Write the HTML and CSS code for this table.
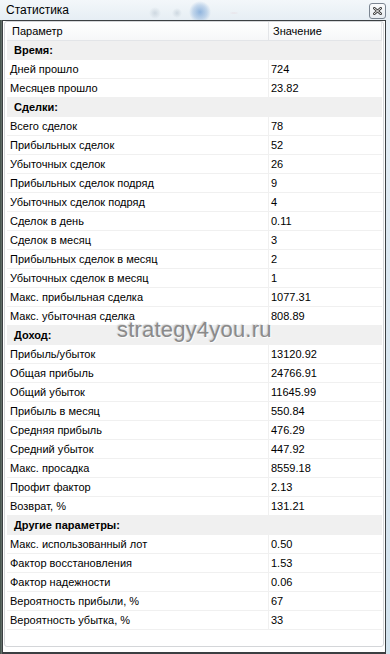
FILE: index.html
```html
<!DOCTYPE html>
<html lang="ru">
<head>
<meta charset="utf-8">
<title>Статистика</title>
<link rel="stylesheet" href="styles.css">
</head>
<body>
<div class="window">
  <div class="titlebar">
    <span class="title">Статистика</span>
    <button class="close" aria-label="Закрыть">
      <svg width="9" height="8" viewBox="0 0 9 8">
        <path d="M1 1 L8 7 M8 1 L1 7" stroke="#3c3c3c" stroke-width="2.6" stroke-linecap="square"/>
        <path d="M1 1 L8 7 M8 1 L1 7" stroke="#ffffff" stroke-width="0.9" stroke-linecap="square"/>
      </svg>
    </button>
  </div>
  <div class="client">
    <div class="list">
      <div class="row head">
        <div class="cell">Параметр</div>
        <div class="cell">Значение</div>
      </div>
      <div class="row section"><div class="cell">Время:</div><div class="cell"></div></div>
      <div class="row"><div class="cell">Дней прошло</div><div class="cell">724</div></div>
      <div class="row"><div class="cell">Месяцев прошло</div><div class="cell">23.82</div></div>
      <div class="row section"><div class="cell">Сделки:</div><div class="cell"></div></div>
      <div class="row"><div class="cell">Всего сделок</div><div class="cell">78</div></div>
      <div class="row"><div class="cell">Прибыльных сделок</div><div class="cell">52</div></div>
      <div class="row"><div class="cell">Убыточных сделок</div><div class="cell">26</div></div>
      <div class="row"><div class="cell">Прибыльных сделок подряд</div><div class="cell">9</div></div>
      <div class="row"><div class="cell">Убыточных сделок подряд</div><div class="cell">4</div></div>
      <div class="row"><div class="cell">Сделок в день</div><div class="cell">0.11</div></div>
      <div class="row"><div class="cell">Сделок в месяц</div><div class="cell">3</div></div>
      <div class="row"><div class="cell">Прибыльных сделок в месяц</div><div class="cell">2</div></div>
      <div class="row"><div class="cell">Убыточных сделок в месяц</div><div class="cell">1</div></div>
      <div class="row"><div class="cell">Макс. прибыльная сделка</div><div class="cell">1077.31</div></div>
      <div class="row"><div class="cell">Макс. убыточная сделка</div><div class="cell">808.89</div></div>
      <div class="row section"><div class="cell">Доход:</div><div class="cell"></div></div>
      <div class="row"><div class="cell">Прибыль/убыток</div><div class="cell">13120.92</div></div>
      <div class="row"><div class="cell">Общая прибыль</div><div class="cell">24766.91</div></div>
      <div class="row"><div class="cell">Общий убыток</div><div class="cell">11645.99</div></div>
      <div class="row"><div class="cell">Прибыль в месяц</div><div class="cell">550.84</div></div>
      <div class="row"><div class="cell">Средняя прибыль</div><div class="cell">476.29</div></div>
      <div class="row"><div class="cell">Средний убыток</div><div class="cell">447.92</div></div>
      <div class="row"><div class="cell">Макс. просадка</div><div class="cell">8559.18</div></div>
      <div class="row"><div class="cell">Профит фактор</div><div class="cell">2.13</div></div>
      <div class="row"><div class="cell">Возврат, %</div><div class="cell">131.21</div></div>
      <div class="row section"><div class="cell">Другие параметры:</div><div class="cell"></div></div>
      <div class="row"><div class="cell">Макс. использованный лот</div><div class="cell">0.50</div></div>
      <div class="row"><div class="cell">Фактор восстановления</div><div class="cell">1.53</div></div>
      <div class="row"><div class="cell">Фактор надежности</div><div class="cell">0.06</div></div>
      <div class="row"><div class="cell">Вероятность прибыли, %</div><div class="cell">67</div></div>
      <div class="row"><div class="cell">Вероятность убытка, %</div><div class="cell">33</div></div>
    </div>
  </div>
  <div class="watermark">strategy4you.ru</div>
</div>
</body>
</html>
```

FILE: styles.css
```css
html, body {
  margin: 0;
  padding: 0;
}
body {
  width: 390px;
  height: 654px;
  overflow: hidden;
  font-family: "Liberation Sans", Arial, sans-serif;
  background:
    linear-gradient(to right, #3e4a44 0, #6d7a74 2px, transparent 3px),
    linear-gradient(to bottom, #e9f1f7 0, #dbe8f1 40%, #d3e3ee 100%);
}
.window {
  position: relative;
  width: 390px;
  height: 654px;
  display: flex;
  flex-direction: column;
}
.titlebar {
  height: 20px;
  display: flex;
  align-items: center;
  justify-content: space-between;
  padding: 0 4px 0 6px;
  background:
    radial-gradient(circle at 200px 12px, rgba(70,130,200,0.55) 0, rgba(70,130,200,0.25) 7px, transparent 11px),
    radial-gradient(ellipse at 234px 13px, rgba(210,60,70,0.55) 0, rgba(210,60,70,0.2) 6px, transparent 10px),
    radial-gradient(circle at 155px 13px, rgba(120,140,160,0.25) 0, transparent 6px),
    radial-gradient(circle at 177px 13px, rgba(120,140,160,0.25) 0, transparent 5px),
    linear-gradient(to bottom, #f3f7fa, #e6eef4);
}
.title {
  font-size: 12px;
  color: #000;
  line-height: 20px;
  margin-top: -1px;
}
.close {
  width: 17px;
  height: 16px;
  margin-top: 1px;
  padding: 0;
  display: flex;
  align-items: center;
  justify-content: center;
  border: 1px solid #7b8591;
  border-radius: 3px;
  background: linear-gradient(to bottom, #fbfcfd, #e7ecf1);
}
.client {
  flex: 1;
  margin-left: 2px;
  width: 384px;
  box-sizing: border-box;
  border: 1px solid #3b3f42;
  border-bottom-width: 2px;
  background: #fff;
  padding: 0 1px 5px 1px;
  display: flex;
  flex-direction: column;
}
.list {
  flex: 1;
  border: 1px solid #d4d6d9;
  border-radius: 3px;
  background: #fff;
  padding: 0 1px 0 2px;
}
.row {
  display: grid;
  grid-template-columns: 262px 1fr;
  font-size: 11px;
  line-height: 18px;
  height: 19px;
  box-sizing: border-box;
  border-bottom: 1px solid #f0f0f0;
  color: #000;
}
.row .cell {
  white-space: nowrap;
  overflow: hidden;
}
.row .cell:first-child {
  padding-left: 3px;
  border-right: 1px solid #f0f0f0;
}
.row .cell:last-child {
  padding-left: 2px;
}
.row.head {
  background: linear-gradient(to bottom, #ffffff, #f6f7f8);
  border-bottom: 1px solid #e3e5e8;
  border-right: 1px solid #e3e5e8;
}
.row.head .cell:first-child {
  padding-left: 5px;
  border-right: 1px solid #e3e5e8;
}
.row.head .cell:last-child {
  padding-left: 4px;
}
.row.section {
  background: #f0f0f0;
  font-weight: bold;
}
.row.section .cell:first-child {
  padding-left: 7px;
  border-right: none;
}
.watermark {
  position: absolute;
  left: 117px;
  top: 317px;
  font-size: 22px;
  color: #8a8a8a;
  text-shadow: 1px 1px 0 rgba(255,255,255,0.8), -1px -1px 1px rgba(150,150,150,0.35);
  letter-spacing: 0.2px;
  pointer-events: none;
}
```
